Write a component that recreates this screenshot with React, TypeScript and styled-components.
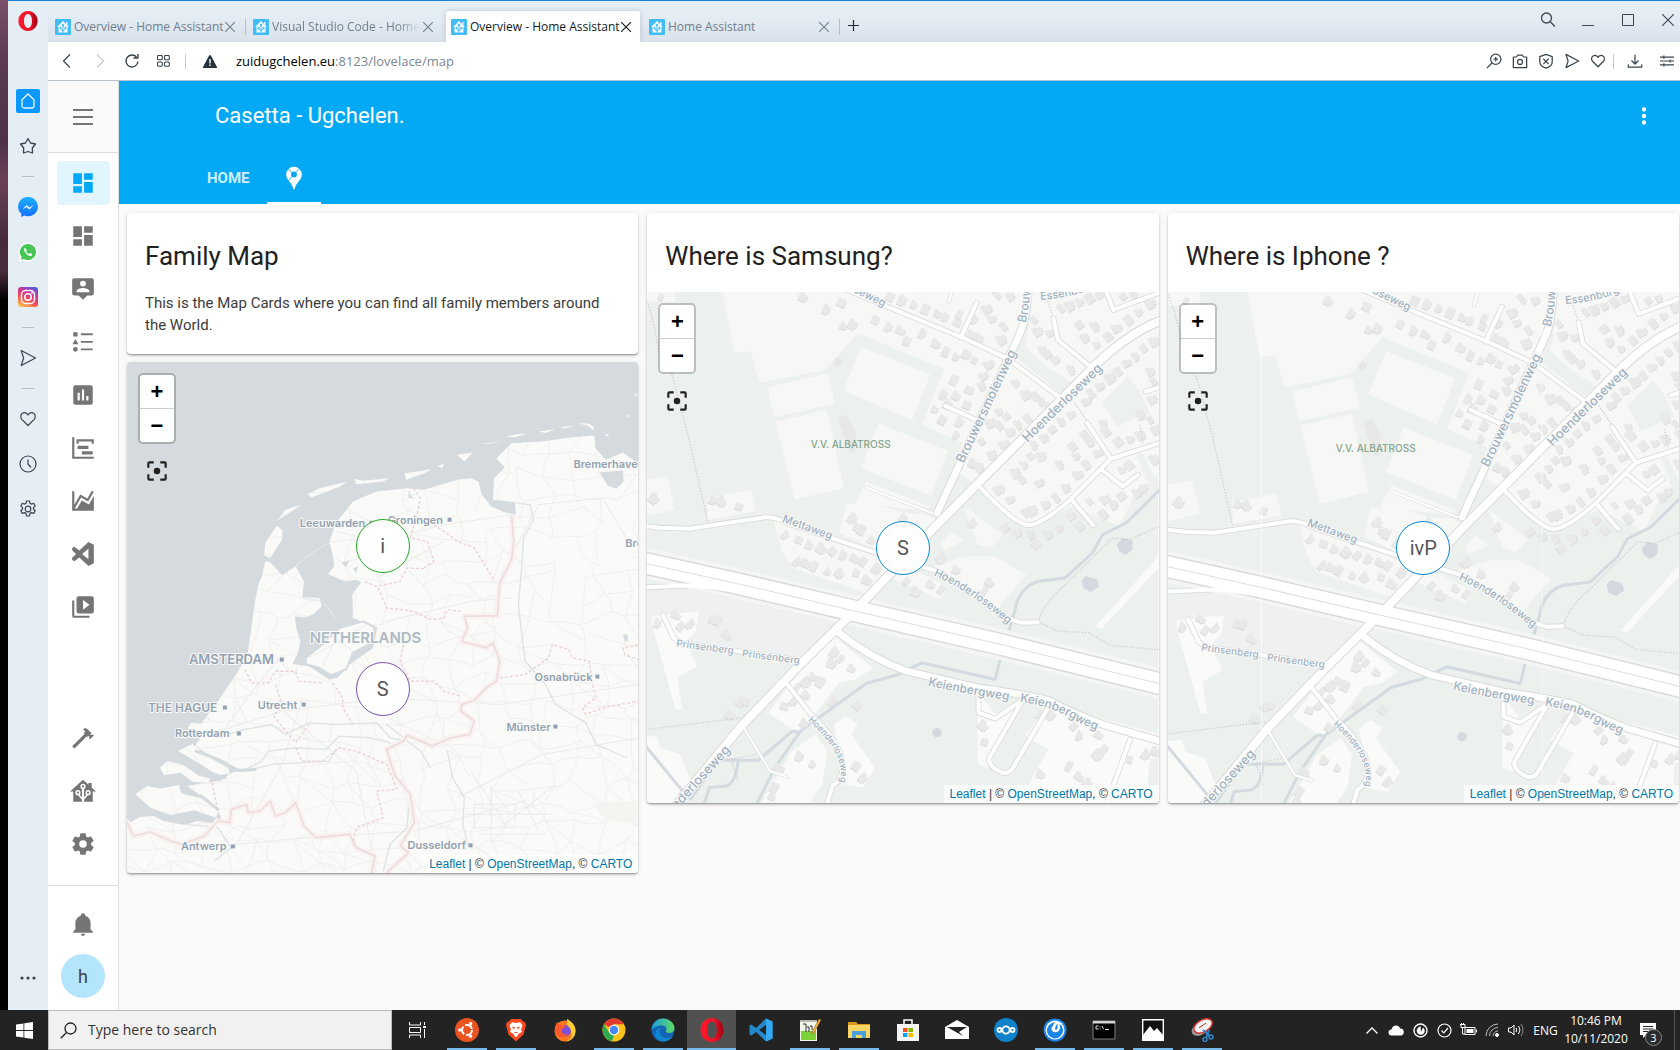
import React, { useId } from "react";
import styled, { createGlobalStyle } from "styled-components";

const GlobalStyle = createGlobalStyle`
  *, *::before, *::after { box-sizing: border-box; }
  body { margin: 0; background: #000; overflow: hidden; }
  button, input { font: inherit; color: inherit; border: 0; padding: 0; margin: 0; background: none; }
  a { color: inherit; text-decoration: none; }
  h1, h2, p { margin: 0; font-weight: 400; }
  svg { display: block; flex: none; }
`;

const UI = `"Open Sans", "Noto Sans", sans-serif`;
const ROBOTO = `Roboto, sans-serif`;

/* ---------- shell ---------- */

const Screen = styled.div`
  display: flex;
  flex-direction: column;
  height: 100vh;
  font-family: ${UI};
`;

const Desktop = styled.div`
  flex: 1;
  min-height: 0;
  display: flex;
  padding-left: 8px;
  background: linear-gradient(#7a4f6b 0, #5b3a52 60px, #4d3247 140px, #6b4059 180px, #452b3d 240px, #4a2c3c 270px, #000 300px);
`;

const BrowserWindow = styled.div`
  flex: 1;
  min-width: 0;
  display: flex;
  border-top: 1px solid #1883d7;
  background: #e5edf5;
`;

const OperaBar = styled.nav`
  width: 40px;
  display: flex;
  flex-direction: column;
  align-items: center;
  padding-bottom: 10px;
  color: #3c4650;
`;

const OperaLogo = styled.button`
  height: 40px;
  margin-bottom: 37px;
  width: 100%;
  display: grid;
  place-items: center;
`;

const OperaButton = styled.button`
  width: 100%;
  height: 45px;
  display: grid;
  place-items: center;
`;

const HomeTile = styled.span`
  width: 24px;
  height: 24px;
  border-radius: 2px;
  background: #0a98ff;
  display: grid;
  place-items: center;
`;

const OperaDivider = styled.span`
  height: 16px;
  width: 12px;
  display: flex;
  align-items: center;
  &::after { content: ""; height: 1px; width: 100%; background: #b4c2ce; }
`;

const Spacer = styled.span`
  flex: 1;
`;

const Main = styled.div`
  flex: 1;
  min-width: 0;
  display: flex;
  flex-direction: column;
`;

/* ---------- tab strip ---------- */

const TabStrip = styled.div`
  height: 41px;
  display: flex;
  align-items: flex-end;
  padding-left: 2px;
  background: linear-gradient(#e5edf5 30%, #d9e1ea);
`;

const Tab = styled.div<{ $active?: boolean }>`
  width: 194px;
  height: 31px;
  margin-right: 4px;
  padding: 0 9px 0 5px;
  display: flex;
  align-items: center;
  gap: 3px;
  background: ${(p) => (p.$active ? "#fff" : "transparent")};
  box-shadow: ${(p) => (p.$active ? "0 0 5px #b6c3d2" : "none")};
  clip-path: inset(-8px -8px 0 -8px);
  border-radius: 2px 2px 0 0;
  color: ${(p) => (p.$active ? "#111a22" : "#71808e")};
`;

const TabLabel = styled.button<{ $fade?: boolean }>`
  flex: 1;
  min-width: 0;
  overflow: ${(p) => (p.$fade ? "hidden" : "visible")};
  white-space: nowrap;
  text-align: left;
  font-size: 12px;
  line-height: 20px;
  mask-image: ${(p) => (p.$fade ? "linear-gradient(90deg, #000 85%, transparent)" : "none")};
`;

const TabClose = styled.button`
  width: 10px;
  height: 14px;
  display: grid;
  place-items: center;
`;

const TabRule = styled.span`
  width: 1px;
  height: 16px;
  margin: 0 2px 7px -3px;
  background: #b3bfcb;
`;

const NewTab = styled.button`
  width: 22px;
  height: 34px;
  color: #222b33;
  display: grid;
  place-items: center;
`;

const WindowButtons = styled.div`
  margin-left: auto;
  align-self: stretch;
  display: flex;
  color: #3d464f;
`;

const WindowButton = styled.button`
  width: 40px;
  height: 38px;
  display: grid;
  place-items: center;
  &:last-child { width: 32px; padding-left: 8px; }
`;

/* ---------- address bar ---------- */

const Toolbar = styled.div`
  height: 39px;
  display: flex;
  align-items: center;
  background: #fff;
  border-bottom: 1px solid #b5c1cb;
  padding-left: 2px;
  color: #3a444d;
`;

const ToolButton = styled.button<{ $w: number }>`
  width: ${(p) => p.$w}px;
  height: 32px;
  display: grid;
  place-items: center;
  &:disabled { color: #c3cad1; }
`;

const ToolRule = styled.span<{ $gap: number }>`
  width: 1px;
  height: 15px;
  margin: 0 ${(p) => p.$gap}px;
  background: #c4c9ce;
`;

const Address = styled.button`
  flex: 1;
  text-align: left;
  font-size: 13px;
  line-height: 20px;
  padding-left: 8px;
  color: #7b8895;
  b { font-weight: 400; color: #000; }
`;

/* ---------- Home Assistant ---------- */

const Page = styled.div`
  flex: 1;
  min-height: 0;
  display: flex;
  background: #fafafa;
  font-family: ${ROBOTO};
`;

const SideNav = styled.nav`
  width: 71px;
  border-right: 1px solid #dcdcdc;
  background: #fff;
  display: flex;
  flex-direction: column;
  color: #757575;
`;

const MenuButton = styled.button`
  height: 72px;
  background: #fafafa;
  border-bottom: 1px solid #dcdcdc;
  display: grid;
  place-items: center;
`;

const NavList = styled.div`
  flex: 1;
  display: flex;
  flex-direction: column;
  align-items: center;
  gap: 9px;
  padding: 8px 0 19px;
`;

const NavFoot = styled.div`
  display: flex;
  flex-direction: column;
  align-items: center;
  gap: 8px;
  padding: 16px 0 12px;
  border-top: 1px solid #dcdcdc;
`;

const NavItem = styled.a<{ $active?: boolean }>`
  width: 53px;
  height: 44px;
  border-radius: 4px;
  display: grid;
  place-items: center;
  color: ${(p) => (p.$active ? "#03a9f4" : "inherit")};
  background: ${(p) => (p.$active ? "#e1f5fe" : "none")};
`;

const Avatar = styled.a`
  width: 44px;
  height: 44px;
  border-radius: 50%;
  background: #b3e5fc;
  color: #424242;
  font-size: 18px;
  display: grid;
  place-items: center;
`;

const Lovelace = styled.main`
  flex: 1;
  min-width: 0;
`;

const Header = styled.header`
  background: #03a9f4;
  color: #fff;
  height: 123px;
  display: flex;
  flex-direction: column;
  justify-content: space-between;
`;

const HeaderRow = styled.div`
  height: 70px;
  display: flex;
  align-items: center;
  justify-content: space-between;
  padding: 0 23px 0 96px;
`;

const AppTitle = styled.h1`
  font-size: 22px;
  line-height: 28px;
`;

const ViewTabs = styled.div`
  display: flex;
  height: 53px;
  padding-left: 71px;
`;

const ViewTab = styled.button<{ $active?: boolean }>`
  padding: 2px ${(p) => (p.$active ? 14 : 17)}px 0;
  font-size: 15px;
  font-weight: 700;
  line-height: 20px;
  color: ${(p) => (p.$active ? "#fff" : "#cdeefd")};
  border-bottom: 2px solid ${(p) => (p.$active ? "#fff" : "transparent")};
`;

const Columns = styled.div`
  display: grid;
  grid-template-columns: repeat(3, minmax(0, 1fr));
  align-items: start;
  gap: 9px;
  padding: 9px 1px 8px 8px;
`;

const Column = styled.div`
  display: flex;
  flex-direction: column;
  gap: 8px;
`;

const Card = styled.section`
  background: #fff;
  border-radius: 4px;
  overflow: hidden;
  box-shadow: 0 2px 2px 0 rgba(0, 0, 0, 0.14), 0 1px 5px 0 rgba(0, 0, 0, 0.1), 0 1px 1px 0 rgba(0, 0, 0, 0.2);
`;

const CardTitle = styled.h2`
  font-size: 26px;
  line-height: 40px;
  padding: 23px 18px 16px;
  color: #212121;
`;

const CardText = styled.p`
  font-size: 15px;
  line-height: 22px;
  padding: 0 18px 18px;
  color: #3c3c3c;
`;

const MapFrame = styled.div`
  position: relative;
  aspect-ratio: 1;
  & > svg { width: 100%; height: 100%; }
`;

const MapControls = styled.div`
  position: absolute;
  top: 11px;
  left: 11px;
  display: flex;
  flex-direction: column;
  align-items: center;
  gap: 14px;
`;

const ZoomBox = styled.div`
  width: 38px;
  border: 2px solid rgba(0, 0, 0, 0.2);
  border-radius: 5px;
  background: #fff;
  background-clip: padding-box;
  display: flex;
  flex-direction: column;
`;

const ZoomButton = styled.button`
  height: 33px;
  font-family: "Liberation Sans", Arial, sans-serif;
  font-size: 22px;
  font-weight: 700;
  line-height: 33px;
  color: #000;
  & + & { border-top: 1px solid #ccc; height: 34px; }
`;

const FocusButton = styled.button`
  color: #212121;
`;

const Marker = styled.button<{ $x: number; $y: number; $color: string }>`
  position: absolute;
  left: ${(p) => p.$x}%;
  top: ${(p) => p.$y}%;
  transform: translate(-50%, -50%);
  width: 54px;
  height: 54px;
  border-radius: 50%;
  border: 1px solid ${(p) => p.$color};
  background: #fff;
  color: #555;
  font-size: 20px;
`;

const Attribution = styled.div`
  position: absolute;
  right: 0;
  bottom: 0;
  padding: 0 6px;
  background: rgba(255, 255, 255, 0.7);
  font-family: "Liberation Sans", Arial, sans-serif;
  font-size: 12px;
  line-height: 18px;
  color: #333;
  a { color: #0078a8; }
`;

/* ---------- Windows taskbar ---------- */

const Taskbar = styled.footer`
  height: 40px;
  display: flex;
  background: #232323;
  color: #fff;
`;

const StartButton = styled.button`
  width: 48px;
  display: grid;
  place-items: center;
`;

const SearchBox = styled.label`
  width: 344px;
  margin-right: 1px;
  display: flex;
  align-items: center;
  gap: 11px;
  padding-left: 11px;
  background: #f1f1f1;
  border: 1px solid #bcbcbc;
  color: #222;
  input {
    flex: 1;
    min-width: 0;
    font-size: 14px;
    line-height: 20px;
    outline: 0;
  }
  input::placeholder { color: #333; opacity: 1; }
`;

const TaskButton = styled.button<{ $open?: boolean; $active?: boolean }>`
  width: 49px;
  height: 40px;
  display: grid;
  place-items: center;
  background:
    linear-gradient(${(p) => (p.$open ? "#76b9ed, #76b9ed" : "transparent, transparent")}) bottom / ${(p) => (p.$active ? 49 : 40)}px 2px no-repeat
    ${(p) => (p.$active ? "#515151" : "transparent")};
`;

const Tray = styled.div`
  margin-left: auto;
  display: flex;
  align-items: center;
  padding-right: 5px;
`;

const TrayButton = styled.button`
  width: 24px;
  height: 40px;
  display: grid;
  place-items: center;
`;

const Language = styled.button`
  font-size: 12px;
  width: 35px;
`;

const Clock = styled.button`
  width: 66px;
  font-size: 12px;
  line-height: 18px;
  time { display: block; }
`;

const Notifications = styled.button`
  position: relative;
  width: 46px;
  height: 40px;
  padding-right: 8px;
  display: grid;
  place-items: center;
  border-right: 1px solid #555;
`;

const Badge = styled.span`
  position: absolute;
  right: 12px;
  bottom: 4px;
  width: 17px;
  height: 17px;
  border-radius: 50%;
  border: 1px solid #8a8a8a;
  background: #2b2b2b;
  font-size: 11px;
  line-height: 15px;
  text-align: center;
`;

/* ---------- icons ---------- */

const Solid = ({ d, size = 26 }: { d: string; size?: number }) => (
  <svg width={size} height={size} viewBox="0 0 24 24" fill="currentColor" fillRule="evenodd"><path d={d} /></svg>
);

const Line = ({ children, size = 18, w = 1.2 }: { children: React.ReactNode; size?: number; w?: number }) => (
  <svg width={size} height={size} viewBox="0 0 18 18" fill="none" stroke="currentColor" strokeWidth={w} strokeLinejoin="round">{children}</svg>
);

const icons = {
  dashboard: "M13 3v6h8V3m-8 18h8V11h-8M3 21h8v-6H3m0-2h8V3H3v10z",
  person: "M20 2H4a2 2 0 0 0-2 2v12a2 2 0 0 0 2 2h4l4 4 4-4h4a2 2 0 0 0 2-2V4a2 2 0 0 0-2-2zm-8 2.3a2.7 2.7 0 1 1 0 5.4 2.7 2.7 0 0 1 0-5.4zM18 15H6v-.9c0-2 4-3.1 6-3.1s6 1.1 6 3.1z",
  list: "M3 3h4v4H3zM10 4h11v1.7H10zM5 9.2 7.8 14H2.2zM10 11h11v1.7H10zM5 16.5a2.2 2.2 0 1 1 0 4.4 2.2 2.2 0 0 1 0-4.4zM10 18h11v1.7H10z",
  chart: "M9 17H7v-7h2zm4 0h-2V7h2zm4 0h-2v-4h2zM19 3H5a2 2 0 0 0-2 2v14a2 2 0 0 0 2 2h14a2 2 0 0 0 2-2V5a2 2 0 0 0-2-2z",
  gantt: "M2 2h2v18h18v2H2V2m5 8h10v3H7v-3m4 5h10v3H11v-3M6 4h16v4h-2V6H8v2H6V4z",
  area: "M17.45 15.18 22 7.31V21H2V3h2v12.54L9.5 6 16 9.78l4.24-7.33 1.73 1-5.23 9.05-6.51-3.75L4.31 19h2.26l4.39-7.56 6.49 3.74z",
  vscode: "M17 1 22 3.4v17.2L17 23 8.6 15.2 4 18.7 2 17.6v-2.2L5.6 12 2 8.6V6.4l2-1.1 4.6 3.5zM17 7.2 11.2 12l5.8 4.8z",
  media: "M4 6H2v14a2 2 0 0 0 2 2h14v-2H4V6m16-4H8a2 2 0 0 0-2 2v12a2 2 0 0 0 2 2h12a2 2 0 0 0 2-2V4a2 2 0 0 0-2-2m-8 12.5v-9l6 4.5-6 4.5z",
  hammer: "M2 19.63 13.43 8.2l-.71-.7 1.42-1.43L12 3.89c1.2-1.19 3.09-1.19 4.27 0l3.6 3.61-1.42 1.41h2.84l.71.71-3.55 3.59-.71-.71V9.62l-1.47 1.42-.71-.71L4.13 21.76z",
  cog: "M12 15.5A3.5 3.5 0 0 1 8.5 12 3.5 3.5 0 0 1 12 8.5a3.5 3.5 0 0 1 3.5 3.5 3.5 3.5 0 0 1-3.5 3.5m7.43-2.53c.04-.32.07-.64.07-.97 0-.33-.03-.66-.07-1l2.11-1.63c.19-.15.24-.42.12-.64l-2-3.46c-.12-.22-.39-.31-.61-.22l-2.49 1c-.52-.39-1.06-.73-1.69-.98l-.37-2.65A.506.506 0 0 0 14 2h-4c-.25 0-.46.18-.5.42l-.37 2.65c-.63.25-1.17.59-1.69.98l-2.49-1c-.22-.09-.49 0-.61.22l-2 3.46c-.13.22-.07.49.12.64L4.57 11c-.04.34-.07.67-.07 1 0 .33.03.65.07.97l-2.11 1.66c-.19.15-.25.42-.12.64l2 3.46c.12.22.39.3.61.22l2.49-1.01c.52.4 1.06.74 1.69.99l.37 2.65c.04.24.25.42.5.42h4c.25 0 .46-.18.5-.42l.37-2.65c.63-.26 1.17-.59 1.69-.99l2.49 1.01c.22.08.49 0 .61-.22l2-3.46c.12-.22.07-.49-.12-.64z",
  bell: "M21 19v1H3v-1l2-2v-6c0-3.1 2.03-5.83 5-6.71V4a2 2 0 0 1 4 0v.29c2.97.88 5 3.61 5 6.71v6l2 2m-7 2a2 2 0 0 1-4 0",
  menu: "M2 4h20v2H2zm0 7h20v2H2zm0 7h20v2H2z",
  dots: "M12 16a2 2 0 1 1 0 4 2 2 0 0 1 0-4m0-6a2 2 0 1 1 0 4 2 2 0 0 1 0-4m0-6a2 2 0 1 1 0 4 2 2 0 0 1 0-4z",
  focus: "M5 15H3v4a2 2 0 0 0 2 2h4v-2H5m0-14h4V3H5a2 2 0 0 0-2 2v4h2m14-6h-4v2h4v4h2V5a2 2 0 0 0-2-2m0 16h-4v2h4a2 2 0 0 0 2-2v-4h-2M12 9a3 3 0 1 0 0 6 3 3 0 0 0 0-6z",
};

const MapPin = () => (
  <svg width="26" height="26" viewBox="0 0 24 24">
    <path d="M12 1.5a7.2 7.2 0 0 0-7.2 7.2c0 2.6 1.2 4.4 3 6.6 1.8 2.2 2.8 3.8 3.3 6 .2.8.4 1.2.9 1.2s.7-.4.9-1.2c.5-2.2 1.5-3.8 3.300-6 1.8-2.2 3-4 3-6.6A7.2 7.2 0 0 0 12 1.5z" fill="#fff" />
    <circle cx="12" cy="8.7" r="2.7" fill="#03a9f4" />
    <path d="M14 6.6 16.8 3.3M10 10.8 6.5 15M10 6.6 6.6 3.8" stroke="#03a9f4" strokeWidth=".8" />
  </svg>
);

const HomeTree = () => (
  <svg width="26" height="26" viewBox="0 0 24 24">
    <path d="M12 1.5 24 12.5h-3V22H3v-9.5H0zM17 4.5h3v5L17 7z" fill="currentColor" />
    <g stroke="#fff" strokeWidth="1.4" fill="currentColor">
      <path d="M12 22V9" strokeWidth="2" /><path d="M12 20l-4-4.500M12 20l4-4.500" />
      <circle cx="12" cy="7.800" r="1.700" /><circle cx="7.300" cy="13.500" r="1.700" /><circle cx="16.700" cy="13.500" r="1.700" />
    </g>
  </svg>
);

const Favicon = () => (
  <svg width="16" height="16" viewBox="0 0 16 16">
    <rect width="16" height="16" rx="1" fill="#41bdf5" />
    <path d="M8 2 14 8h-1.5v5.5h-9V8H2zM11 3.3h1.500v3L11 5z" fill="#f2f9fd" />
    <g stroke="#41bdf5" fill="#41bdf5"><path d="M8 13.5v-7M8 12 5.500 9.500M8 12l2.500-2.500" /><circle cx="8" cy="6" r=".8" /><circle cx="5.500" cy="9" r=".7" /><circle cx="10.500" cy="9" r=".7" /></g>
  </svg>
);

const Cross = ({ size = 10 }: { size?: number }) => (
  <svg width={size} height={size} viewBox="0 0 10 10" stroke="currentColor" strokeWidth={size > 10 ? 0.9 : 1.1}><path d="M0 0 10 10M10 0 0 10" /></svg>
);

const OperaMark = ({ h = 20 }: { h?: number }) => {
  const id = useId();
  return (
    <svg width={h} height={h} viewBox="0 0 20 20">
      <defs><linearGradient id={id} x1="0" x2="1"><stop offset="0" stopColor="#ff1b2d" /><stop offset=".6" stopColor="#f01227" /><stop offset="1" stopColor="#9c0012" /></linearGradient></defs>
      <path fillRule="evenodd" fill={`url(#${id})`} d="M10 0c5.500 0 9.600 4.500 9.600 10S15.500 20 10 20 .4 15.500.4 10 4.500 0 10 0zm0 3C7.500 3 6 6 6 10s1.500 7 4 7 4-3 4-7-1.500-7-4-7z" />
    </svg>
  );
};

const heart = "M9 15.500 2.800 9.300C1.200 7.500 1.500 4.500 3.400 3.300 5.500 2 8 2.900 9 5c1-2.100 3.500-3 5.600-1.700 1.900 1.200 2.200 4.200.6 6z";
const plane = "M2.200 1.500 16.500 9 2.200 16.500 4.600 9z";

const Messenger = () => (
  <svg width="20" height="20" viewBox="0 0 20 20"><defs><linearGradient id="msg" x2="0" y2="1"><stop stopColor="#1cb0ff" /><stop offset="1" stopColor="#1370ff" /></linearGradient></defs><path d="M10 0a10 9.600 0 1 1-3.500 18.600L3.300 20v-3.300A9.600 9.600 0 0 1 10 0z" fill="url(#msg)" /><path d="m4.500 12.500 4-4.500 3 2.500L15.500 8l-4 4.500-3-2.500z" fill="#fff" /></svg>
);

const WhatsApp = () => (
  <svg width="20" height="20" viewBox="0 0 20 20"><path d="M10 .5a9.500 9.500 0 1 1-4.500 17.900L.8 19.500 2 15A9.500 9.500 0 0 1 10 .5z" fill="#fff" /><path d="M10 2a8 8 0 1 1-4 14.900L2.800 17.700 3.700 15A8 8 0 0 1 10 2z" fill="#45c655" /><path d="M7.300 5.800c-1.500.7-1.600 2.300-.3 4.300 1.700 2.600 4.400 4.600 6.200 3.700 1-.5 1.200-1.400 1-1.700l-2-1.100-1 1.100C9.900 11.600 8.700 10.500 8.100 9.200l.8-1z" fill="#fff" /></svg>
);

const Instagram = () => (
  <svg width="20" height="20" viewBox="0 0 20 20"><defs><linearGradient id="ig" x1=".2" y1="1" x2=".7" y2="0"><stop stopColor="#fdc04f" /><stop offset=".4" stopColor="#f3484f" /><stop offset=".7" stopColor="#c9339a" /><stop offset="1" stopColor="#5a58d6" /></linearGradient></defs><rect width="20" height="20" rx="3" fill="url(#ig)" /><rect x="3.500" y="3.500" width="13" height="13" rx="4" fill="none" stroke="#fff" strokeWidth="1.500" /><circle cx="10" cy="10" r="3.200" fill="none" stroke="#fff" strokeWidth="1.500" /><circle cx="14" cy="6" r=".9" fill="#fff" /></svg>
);

const Windows = () => (
  <svg width="17" height="17" viewBox="0 0 17 17" fill="#fff"><path d="M0 2.500 7.500 1.400V8H0zM8.300 1.300 17 0v8H8.300zM0 8.900h7.500v6.600L0 14.400zM8.300 8.900H17V17l-8.700-1.300z" /></svg>
);

/* ---------- street map ---------- */

// Drawing units are roughly a third of a map pixel.
const SKETCH = "translate(-7 -87) scale(.338 .3333)";

const builtUp = [
  "235,200 278,443 328,440 353,535 548,495 645,385 902,492 835,660 955,715 880,920 940,800 1010,850 1090,930 1150,975 1280,905 1420,965 1470,860 1545,800 1545,200",
  "655,427 860,508 806,646 602,557", "378,547 556,505 578,597 397,637", "403,650 553,615 604,850 457,885",
  "706,656 912,738 862,873 655,790", "670,830 860,905 850,920 720,903 690,935 637,895",
  "-20,830 80,817 103,915 -20,945", "200,880 330,855 345,920 200,945", "-20,200 100,200 105,290 -20,290",
  "610,895 720,905 780,925 850,930 880,950 830,1000 700,1035 590,985", "395,945 420,1040 450,1090 680,1170 730,1115 890,1185 910,1145 820,1100 690,1050 560,1010",
  "960,905 1075,990 1040,1030 1000,1020", "870,1085 960,1055 1050,1055 1145,1110 1060,1210 1000,1180 900,1130", "920,980 960,1010 900,1035 890,1020",
];
const openLand = [
  "35,1235 175,1220 165,1280 135,1310 170,1385 110,1420 125,1515 105,1515 35,1260",
  "-20,1600 50,1595 60,1630 120,1650 160,1760 100,1800 -20,1800", "380,1525 560,1285 690,1390 640,1425 590,1435 480,1580 450,1575",
  "450,1640 520,1590 555,1640 540,1740 500,1795 360,1795", "575,1560 610,1535 645,1560 625,1590 697,1690 660,1750 600,1740",
  "1000,1460 1060,1540 1130,1490 1030,1690 1000,1680", "1140,1595 1210,1635 1120,1795 1500,1795 1510,1665 1545,1660 1545,1590 1210,1500",
  "1545,1045 1350,1265 1368,1272 1545,1080", "485,1765 510,1765 510,1800 485,1800",
];
const greens = ["1160,261 1150,380 1140,425 1210,490 1290,540 1300,580 1240,560 1110,455 1125,380", "1370,590 1445,515 1480,560 1510,625 1410,665", "1470,750 1490,745 1530,830 1500,830"];

const wide = ["M1155,200L1150,261 1141,335Q1135,370 1105,430L880,925", "M590,1285Q680,1360 790,1400L1000,1450Q1130,1468 1210,1488 1300,1535 1370,1560L1560,1616"];
const trunk = ["M1560,340Q1450,380 1350,480L880,960 640,1215 470,1385 300,1565 90,1825"];
const streets = [
  "M-20,960L60,969 145,972 370,938Q400,935 440,957L700,1045 880,1100Q960,1150 1080,1238L1130,1255 1178,1253",
  "M560,232L720,300 960,400 1090,462 1245,578", "M998,293L950,398", "M905,603L995,645", "M1225,340L1238,405 1340,490",
  "M1370,230L1403,315 1560,255", "M1560,540L1498,560", "M1325,655L1395,762 1560,708", "M1395,762L1275,885Q1190,960 1150,962 1110,958 1010,850",
  "M1368,795L1430,845 1475,810", "M1278,885L1343,962", "M68,1232L100,1300 120,1315 490,1370", "M1003,1465V1525L1052,1543 1135,1485",
  "M1135,1485L1035,1660Q1030,1685 1070,1704 1092,1712 1105,1690L1215,1500", "M1452,1605L1375,1820", "M437,1440L510,1535Q600,1620 602,1690 595,1730 570,1745L548,1820", "M-20,1150L160,1142 300,1160 420,1185",
];
const lanes = ["M670,848L865,925", "M307,1570L385,1700 435,1717", "M930,240L915,290"];
const streams = [
  "M1560,835L1440,955 1370,990 1340,1045 1260,1120 1180,1130Q1120,1150 1110,1220L1070,1355 1052,1425 835,1375 765,1410 670,1437 475,1580 400,1690 345,1800",
  "M470,1590Q460,1570 440,1590L350,1668H230L150,1785", "M290,1670Q285,1735 255,1745L205,1750 190,1800", "M-20,1580L130,1765",
];
const paths = [
  "M0,230L21,290Q40,340 55,440L95,510 140,680 200,950", "M1205,280L1225,340", "M1285,590L1325,650", "M1480,660L1490,715",
  "M-20,1580L300,1540", "M1180,1250Q1200,1190 1260,1140L1400,1000 1450,1005 1560,955", "M1180,1253L1240,1280 1330,1285 1395,1323 1560,1338", "M270,1665L345,1650M270,1665L290,1730",
];
const homes = `62,275 482,275 550,313 597,293 628,358 602,362 740,275 775,285 810,298 845,312 880,325 903,335 940,352 978,387 1000,400 697,345 735,365 770,375 790,408 835,385 875,415 905,440 935,455 965,447 990,465 1030,480
985,340 945,328 1025,313 1040,342 1075,365 1068,405 1095,275 1055,270 1015,515 1010,545 975,555 935,572 897,568 968,600 910,597 872,612 895,645 945,650 935,690 930,525 1060,620 1035,655 1084,635 1110,535 1140,570 1168,573 1185,590 1210,602 1145,640 1118,660 1095,682 1062,662 1075,718 1040,750 1010,710 985,775 1003,788
1165,345 1175,380 1212,385 1245,310 1270,303 1300,292 1330,280 1360,270 1190,435 1205,450 1228,465 1275,495 1300,360 1315,400 1350,420 1385,395 1345,365 1410,370 1445,345 1475,322 1510,297 1430,275 1460,270 1520,410 1490,430 1465,455 1440,475 1415,500 1390,520 1360,545 1335,565 1320,590 1510,500 1520,530 1515,585 1480,630 1510,645 1525,675 1450,703 1415,712 1480,692 1370,655 1378,680 1275,630 1245,650 1220,675 1195,700 1165,720 1315,690 1330,712 1355,745 1280,725 1240,780 1295,810 1320,780 1290,755 1185,755 1155,755 1135,780 1110,805 1130,825 1060,855 1095,885 1140,925 1158,918 1200,900 1230,880 1180,835 1260,850 1330,890 1375,885 1400,900 1425,875 1470,865 1425,795 1448,782 1520,765 1490,850 1370,930 1275,935
430,990 470,1005 500,1020 535,1030 570,1040 600,1050 635,1060 660,1070 465,1070 490,1075 515,1085 555,1100 590,1105 640,1105 670,1125 700,1090 790,1130 815,1160 860,1138 892,1155 892,1060 935,1095 1020,1158 1035,1132 985,955 1080,970 1115,985 1155,990 1175,1020 1205,990 1240,970 1300,965 628,940 640,965 655,975 685,1005 240,888 292,905 215,885 40,880 780,940
50,1255 105,1230 120,1265 148,1258 215,1245 230,1247 256,1290 298,1493 314,1493 265,1530 575,1342 595,1362 565,1375 625,1390 465,1448 490,1432 510,1415 533,1432 490,1470 455,1490 427,1505 485,1555 570,1490 645,1503 470,1655 510,1678 640,1685 660,1720 410,1690 398,1750 390,1775 1015,1562 1020,1612 1185,1530 1215,1530 1285,1565 1300,1593 1357,1590 1375,1635 1355,1650 1185,1708 1270,1685 1300,1715 1325,1735 1450,1665 1525,1640 1497,1650`
  .split(/\s+/).map((p) => p.split(",").map(Number));

const homeShape = (x: number, y: number, i: number) => {
  const turn = x > 1000 && y < 1000 ? -38 + (i % 3) * 6 : y < 700 ? 26 : 20 + (i % 4) * 8;
  const w = 16 + ((i * 7) % 11);
  const h = 21 + ((i * 5) % 12);
  const d = i % 3 === 0
    ? `M${-w / 2},${-h / 2}h${w}v${h}h${-w}z`
    : `M${-w / 2},${-h / 2}h${w * 0.6}v5h${w * 0.6}v${h * 0.6}h-5v${h * 0.4 - 5}h${-w * 1.2 + 5}z`;
  return { d, t: `translate(${x} ${y}) rotate(${turn})` };
};

const streetLabels: { d: string; text: string; size: number; end?: boolean }[] = [
  { d: "M317,172L371,58", text: "Brouwersmolenweg", size: 13 },
  { d: "M379,31Q386,8 388,-95", text: "Brouw", size: 12 },
  { d: "M381,151L462,72", text: "Hoenderloseweg", size: 13 },
  { d: "M130,-36L200,-3 237,15", text: "oseweg", size: 11, end: true },
  { d: "M394,8Q425,6 455,-6", text: "Essenburg", size: 11 },
  { d: "M135,230L190,250", text: "Mettaweg", size: 11 },
  { d: "M287,284Q325,300 370,340", text: "Hoenderloseweg", size: 11 },
  { d: "M29,355L98,364", text: "Prinsenberg", size: 10 },
  { d: "M95,365L165,374", text: "Prinsenberg", size: 10 },
  { d: "M281,394Q330,405 380,411", text: "Keienbergweg", size: 12 },
  { d: "M373,410Q405,415 425,427T475,446", text: "Keienbergweg", size: 12 },
  { d: "M161,429Q200,463 193,490L185,505", text: "Hoenderloseweg", size: 9 },
  { d: "M-4,556L84,459", text: "nderloseweg", size: 13, end: true },
];

const Poly = ({ list, fill }: { list: string[]; fill: string }) => <g fill={fill}>{list.map((p) => <polygon key={p} points={p} />)}</g>;
const Strokes = ({ list, color, w, dash }: { list: string[]; color: string; w: number; dash?: string }) => (
  <g fill="none" stroke={color} strokeWidth={w} strokeDasharray={dash} strokeLinejoin="round" strokeLinecap={dash ? "butt" : "round"}>
    {list.map((d) => <path key={d} d={d} />)}
  </g>
);

const motorway = "M-20,1068L280,1135 600,1211 1070,1320 1560,1443";

const StreetMap = ({ shift = 0 }: { shift?: number }) => {
  const id = useId();
  return (
    <svg viewBox="0 0 512 512" preserveAspectRatio="xMidYMid slice" role="img" aria-label="Street map of Ugchelen">
      <rect width="512" height="512" fill="#ecf1ed" />
      <g transform={`translate(${shift} ${shift})`}>
        <g transform={SKETCH}>
          <polygon points="-20,1165 160,1160 560,1255 480,1365 120,1310 -20,1280" fill="#eff1f1" />
          <Poly list={builtUp} fill="#f7f7f6" />
          <Poly list={openLand} fill="#fafaf8" />
          <Poly list={greens} fill="#ecf1ed" />
          <Strokes list={streams} color="#d3dbe0" w={9} />
          <g fill="#d3d9de"><path d="M1412,1020l18-20 30,8 -2,28-20,16-18-12z" /><path d="M1308,1130l12-16 34,10 6,22-24,16-22-10z" /><circle cx="880" cy="1585" r="14" /></g>
          <g>
            {homes.map(([x, y], i) => {
              const s = homeShape(x, y, i);
              return <g key={i} transform={s.t}><path d={s.d} fill="#dadada" transform="translate(1 3)" /><path d={s.d} fill="#e9e9e9" /></g>;
            })}
            <path d="M588,645l22-18 30,55-5,58h-15z" fill="#e7e7e7" />
            <path d="M572,475l12-20 16,12-14,22z" fill="#e7e7e7" />
          </g>
          <Strokes list={paths} color="#cfcfcf" w={4} dash="4 5" />
          <Strokes list={lanes} color="#dedede" w={11} />
          <Strokes list={streets} color="#dadada" w={17} />
          <Strokes list={wide} color="#dadada" w={26} />
          <Strokes list={[motorway]} color="#f5f5f3" w={92} />
          <Strokes list={[motorway]} color="#dadada" w={70} />
          <Strokes list={trunk} color="#dadada" w={30} />
          <Strokes list={lanes} color="#fff" w={7} />
          <Strokes list={streets} color="#fff" w={12} />
          <Strokes list={wide} color="#fff" w={20} />
          <Strokes list={[motorway]} color="#fff" w={61} />
          <Strokes list={trunk} color="#fff" w={24} />
          <Strokes list={[motorway]} color="#dedede" w={3} />
        </g>
        {shift > 0 && <path d="M89.500-4v516M370.500-4v516" stroke="#fff" opacity=".6" />}
        <g fontFamily="Inter, sans-serif" fontWeight="500" fill="#a0b1c0" stroke="#fafafa" strokeWidth="2" strokeLinejoin="round" paintOrder="stroke">
          {streetLabels.map((l, i) => (
            <React.Fragment key={i}>
              <path id={`${id}${i}`} d={l.d} fill="none" stroke="none" />
              <text fontSize={l.size} textAnchor={l.end ? "end" : "start"}>
                <textPath href={`#${id}${i}`} startOffset={l.end ? "100%" : "0"}>{l.text}</textPath>
              </text>
            </React.Fragment>
          ))}
          <text x="204" y="156" fontSize="10" textAnchor="middle" fill="#84a68e" stroke="none">V.V. ALBATROSS</text>
        </g>
      </g>
    </svg>
  );
};

/* ---------- country map ---------- */

const COUNTRY = "translate(-7 -157) scale(.338 .3333)";

const land = [
  "M21,2020V1858L60,1838 100,1835 130,1850 190,1862 230,1850 285,1858 300,1835 262,1800 240,1775 200,1745 235,1738 300,1728 330,1705 355,1698 320,1688 270,1655 222,1625 237,1603 200,1572 210,1555 240,1558 290,1490 350,1400 378,1350 400,1190 410,1140 422,1110 430,1070 445,1073 480,1112 520,1085 545,1130 540,1178 590,1180 598,1205 570,1230 550,1238 518,1236 522,1270 535,1310 525,1350 510,1378 560,1385 620,1425 645,1420 680,1380 750,1330 762,1268 690,1240 688,1170 715,1132 700,1126 665,1130 616,1108 635,1085 628,1040 620,1010 640,955 690,890 760,860 850,850 900,855 1000,825 1040,820 1062,830 1072,870 1100,905 1130,918 1170,892 1105,885 1108,820 1140,787 1115,762 1130,745 1160,715 1250,710 1340,697 1405,692 1408,730 1440,765 1470,752 1490,742 1545,785 1545,2020z",
  "M465,962L482,978 480,1005 445,1060 427,1052 430,1015z", "M465,948L490,915 538,900 515,915z", "M556,868L590,850 672,831 650,846 566,878z",
  "M693,822L720,828 797,820 780,830 700,838z", "M842,805L880,800 922,793 900,806 848,825z", "M998,750L1045,743 1020,770z", "M940,785L960,775 955,790z", "M1060,718L1132,709 1100,716z",
  "M1145,695L1175,688 1207,686 1170,697z", "M1240,680L1290,673 1260,684z", "M1300,668L1345,662 1320,671z", "M1355,655L1390,656 1405,668 1402,676 1385,662z", "M1436,690l14-4-6,8z", "M1500,633l10-3-2,7z", "M1523,570l8-4v9z",
  "M172,1640L215,1618 250,1650 322,1692 324,1708 290,1713 240,1680 205,1660z", "M118,1690L140,1670 185,1680 235,1715 268,1722 260,1735 215,1732 180,1705 130,1712z",
  "M45,1770L80,1745 120,1752 175,1742 180,1765 250,1785 292,1818 285,1840 220,1818 150,1832 90,1810z",
];
const inlets = ["M1420,802L1490,797 1492,830 1470,852 1445,842z", "M1128,892L1170,892 1172,930 1130,920z", "M655,1075l25-8-10,20z", "M690,1092l15-8-4,20z", "M1490,1290h14v18l-8,4z", "M855,855l8,20 12,6-20-2z"];
const rivers = [
  "M1175,895L1215,900 1225,945 1195,1000 1190,1090 1180,1200 1200,1370 1260,1440 1290,1500 1380,1555 1410,1620 1500,1660", "M285,1600L370,1575 450,1560 490,1590 560,1555 640,1560 760,1555 800,1600 850,1610",
  "M320,1690L370,1697 420,1670 440,1640 520,1630 610,1635 650,1595 740,1600 800,1615", "M370,1700L450,1680 620,1670 640,1635", "M790,1560L840,1600 890,1640 920,1690",
  "M970,1640L985,1720 1020,1780 1015,1860 1030,1920", "M860,1770L850,1870 800,1920 780,2000", "M200,1860L290,1870 330,1930 280,1970",
];
const borders = [
  "M1160,935L1166,1010 1160,1065 1125,1135 1118,1233 1020,1235 1030,1270 1012,1310 1085,1330 1105,1315 1125,1370 1115,1430 1085,1450 1050,1487 1012,1500 1010,1520 1050,1550 1035,1590 980,1600 925,1625 850,1592 840,1610 790,1635 800,1670 815,1715 860,1770 872,1855 830,1925 855,1945 785,2010",
  "M21,1855L40,1895 90,1883 150,1910 185,1920 250,1895 290,1850 325,1855 330,1815 375,1800 380,1825 415,1820 445,1790 460,1835 490,1825 520,1795 545,1865 580,1900 680,1890 700,1930 755,1955 745,2010",
];
const provinces = [
  "M870,850L890,880 880,930 860,1000 910,1010 930,1070 900,1090", "M930,960L960,980 1000,1010 1050,1030 1110,1130", "M900,1092L850,1090 830,1130 760,1145 725,1130", "M765,1150L790,1210 870,1220 920,1245 960,1240 970,1215 1010,1220",
  "M370,1395L390,1435 440,1435 460,1400 520,1400 530,1430 600,1435", "M460,1440L480,1500 455,1535 520,1615 560,1560", "M630,1435L660,1480 660,1510 690,1560", "M840,1320L830,1370 860,1430 930,1430 960,1460 1010,1475",
  "M520,1630L540,1670 600,1670 650,1630 700,1640 790,1680 820,1755 760,1760 780,1840 700,1870 690,1915", "M270,1720L280,1770 295,1850", "M1125,1420L1200,1410 1270,1360 1280,1320 1330,1335 1340,1360 1390,1370 1400,1440 1410,1480 1370,1510 1380,1530 1430,1510 1535,1490", "M1535,1320L1490,1330 1495,1350 1535,1365",
];

const mesh = (() => {
  let seed = 11;
  const rnd = () => ((seed = (seed * 16807) % 2147483647) / 2147483647);
  const cols = 22;
  const rows = 23;
  const pts = Array.from({ length: rows }, (_, r) =>
    Array.from({ length: cols }, (_, c) => [c * 74 + rnd() * 62 - 10, 660 + r * 62 + rnd() * 52]),
  );
  const out: string[] = [];
  const join = (a: number[], b: number[]) =>
    out.push(`M${a[0].toFixed()},${a[1].toFixed()}Q${((a[0] + b[0]) / 2 + rnd() * 30 - 15).toFixed()},${((a[1] + b[1]) / 2 + rnd() * 30 - 15).toFixed()} ${b[0].toFixed()},${b[1].toFixed()}`);
  pts.forEach((row, r) =>
    row.forEach((p, c) => {
      if (c + 1 < cols && rnd() > 0.15) join(p, row[c + 1]);
      if (r + 1 < rows && rnd() > 0.2) join(p, pts[r + 1][c]);
      if (r + 1 < rows && c + 1 < cols && r > 8 && rnd() > 0.6) join(p, pts[r + 1][c + 1]);
    }),
  );
  return out.join("");
})();

const cities: [string, number, number, number, number?][] = [
  ["Leeuwarden", 173, 165, 11, 244], ["Groningen", 261, 162, 11, 322], ["Bremerhaven", 447, 106, 11], ["Bremen", 499, 185, 11],
  ["AMSTERDAM", 62, 302, 13, 154], ["THE HAGUE", 21, 350, 12, 97], ["Rotterdam", 48, 376, 11, 111], ["Utrecht", 131, 347, 11, 176],
  ["Osnabrück", 408, 319, 11, 470], ["Münster", 380, 369, 11, 428], ["Antwerp", 54, 489, 11, 105], ["Dusseldorf", 281, 488, 11, 343],
];

const CountryMap = () => (
  <svg viewBox="0 0 512 512" preserveAspectRatio="xMidYMid slice" role="img" aria-label="Map of the Netherlands">
    <rect width="512" height="512" fill="#d4dadd" />
    <g transform={COUNTRY}>
      <clipPath id="land">{land.map((d) => <path key={d} d={d} />)}</clipPath>
      <g fill="#fafaf8">{land.map((d) => <path key={d} d={d} />)}</g>
      <g clipPath="url(#land)" fill="none">
        <path d={mesh} stroke="#f0f0ef" strokeWidth="3" />
        <g stroke="#ebebea" strokeWidth="3">
          <path d="M290,1600L400,1450 480,1350M230,1600L480,1520 790,1480 1120,1500 1540,1440M480,1520L700,1700 760,2010M340,1930L480,1680 540,1480M340,1920L560,1900 870,1880 1200,1790M1000,1780L1250,1650 1540,1600M1040,1700L1140,1860 1290,1740M640,980L760,1010 960,960 1160,930M760,1120L960,1010M790,1250L1040,1190 1160,1180M1140,1090L1240,900 1430,880 1500,1000" />
          <path d="M1050,1800h120v70h-120zM1100,1740v180M1020,1830h260M1060,1890h200M1180,1760l60,120" />
        </g>
      </g>
      <path d="M1400,1795L1535,1790V1855L1440,1850z" fill="#f3f5f1" />
      <path d="M550,1360L600,1320 650,1270 720,1250 755,1268 745,1315 690,1345 670,1395 625,1412 590,1390 550,1378z" fill="#fafaf8" stroke="#d4dadd" strokeWidth="6" />
      <path d="M560,1360L650,1310 730,1260M600,1385L640,1300 690,1340" fill="none" stroke="#ececec" strokeWidth="3" />
      <g fill="#d4dadd">{inlets.map((d) => <path key={d} d={d} />)}</g>
      <Strokes list={["M520,1085L560,1050 625,1010", "M545,1180L600,1190 640,1240"]} color="#e6e9ea" w={3} />
      <Strokes list={rivers} color="#dde3e6" w={4} />
      <Strokes list={["M225,1640L290,1665 350,1698 400,1695", "M190,1655L250,1700 310,1720", "M190,1765L240,1775 290,1815"]} color="#d4dadd" w={9} />
      <Strokes list={borders} color="#f8f2f1" w={18} />
      <Strokes list={borders} color="#efdadc" w={5} />
      <Strokes list={provinces} color="#ecd0d3" w={4} dash="9 6" />
    </g>
    <g fontFamily="Inter, sans-serif" fontWeight="600" fill="#93a2b2" stroke="#fafaf8" strokeWidth="2" strokeLinejoin="round" paintOrder="stroke">
      <text x="183" y="281" fontSize="15" fill="#adbac5">NETHERLANDS</text>
      {cities.map(([name, x, y, size, dot]) => (
        <React.Fragment key={name}>
          <text x={x} y={y} fontSize={size}>{name}</text>
          {dot && <rect x={dot - 1} y={y - 6} width="4" height="4" stroke="none" />}
        </React.Fragment>
      ))}
    </g>
  </svg>
);

const MapView = ({ children }: { children: React.ReactNode }) => (
  <MapFrame>
    {children}
    <MapControls>
      <ZoomBox><ZoomButton aria-label="Zoom in">+</ZoomButton><ZoomButton aria-label="Zoom out">−</ZoomButton></ZoomBox>
      <FocusButton aria-label="Reset focus"><Solid d={icons.focus} /></FocusButton>
    </MapControls>
    <Attribution><a href="#leaflet">Leaflet</a> | © <a href="#osm">OpenStreetMap</a>, © <a href="#carto">CARTO</a></Attribution>
  </MapFrame>
);

/* ---------- taskbar apps ---------- */

const App24 = ({ children }: { children: React.ReactNode }) => <svg width="24" height="24" viewBox="0 0 24 24">{children}</svg>;

const apps: { name: string; open?: boolean; active?: boolean; art: React.ReactNode }[] = [
  { name: "Ubuntu", open: true, art: <App24><circle cx="12" cy="12" r="12" fill="#e95420" /><circle cx="12" cy="12" r="5" fill="none" stroke="#fff" strokeWidth="2" strokeDasharray="8.500 2" /><g fill="#fff"><circle cx="4.800" cy="12" r="1.700" /><circle cx="15.600" cy="5.800" r="1.700" /><circle cx="15.600" cy="18.200" r="1.700" /></g></App24> },
  { name: "Brave", open: true, art: <App24><path d="M7 1h10l2 2.500 2 .5 1 3-2.500 9.500L12 23.500 4.500 16.500 2 7l1-3 2-.5z" fill="#fb4a20" /><path d="m12 5 4-.7 2.500 3-1.500 4.500 1 2-3.500 2.200-1.500 2.500-1 .8-1-.8-1.500-2.500L6 13.800l1-2L5.500 7.300l2.500-3z" fill="#fff" /><path d="M8 8.500l3 .8-1 2.500zM16 8.500l-3 .8 1 2.500zM10 14h4l-2 1.500z" fill="#fb4a20" /></App24> },
  { name: "Firefox", art: <App24><circle cx="12" cy="13" r="10.500" fill="#ff7a1f" /><path d="M14 1c4 2 9 6 8.500 13A10.500 10.500 0 0 1 12 23.500c5-1 7.500-5 6.500-9S13 8 14 1z" fill="#ffcf32" /><circle cx="12" cy="13" r="5.800" fill="#7a4fe0" /><path d="M2 9l2-5 2.500 3C9 6 12 8 12 10c-3 0-4 2-3 4 1 2.500 4 3 6 2-2 4-7 4.500-10 2S1.500 12 2 9z" fill="#ff5a2c" /></App24> },
  { name: "Chrome", open: true, art: <App24><circle cx="12" cy="12" r="11.500" fill="#fbc116" /><path d="M12 12 2 6.300A11.500 11.500 0 0 1 22 6.300H12z" fill="#e33b2e" /><path d="M2 6.300 7.500 15 12 17l-2 6.300A11.500 11.500 0 0 1 2 6.300z" fill="#2da94f" /><circle cx="12" cy="12" r="5.400" fill="#fff" /><circle cx="12" cy="12" r="4.200" fill="#4587f3" /></App24> },
  { name: "Edge", open: true, art: <App24><defs><linearGradient id="edge" x2="1"><stop stopColor="#1e9bdf" /><stop offset="1" stopColor="#5fdb63" /></linearGradient></defs><circle cx="12" cy="12" r="11.500" fill="#1464b4" /><path d="M.5 12C1 5 6 .5 12 .5S23.500 5 23.500 10c0 3-2.500 5-5.500 5-2 0-3.500-.8-3-2 1.500-3-.5-5.500-4-5.500C6 7.500 2 10 .5 12z" fill="url(#edge)" /><path d="M9.500 10c-3 4-.5 9 5 10 3 .5 6-.8 7.500-2.500-1.500 3-5 6-10 6-6-.500-9-5-7.500-9.500.8-2.500 3-3.800 5-4z" fill="#0f86cf" /></App24> },
  { name: "Opera", open: true, active: true, art: <OperaMark h={24} /> },
  { name: "Visual Studio Code", art: <App24><path d="M17 .5 23.500 3.500v17L17 23.500 7 14l-4.500 3.500L.5 16.500v-9l2-1L7 10zM17 7l-7 5 7 5z" fill="#2489ca" fillRule="evenodd" /><path d="M17 .5 23.500 3.500v17L17 23.500z" fill="#35a8f0" /></App24> },
  { name: "Notepad++", open: true, art: <App24><path d="M2 3h17v20H2z" fill="#f2f5ea" /><path d="M3 13h15v9H3z" fill="#7bd136" /><path d="M5 6h3v8M9 9h2v5M12 8h2v4" stroke="#333" fill="none" /><path d="M2 2h17v2H2z" fill="#b8b8b8" /><path d="m14 14 7-13 2 1-7 13-2 1z" fill="#f3b33d" stroke="#7d5b1d" strokeWidth=".5" /></App24> },
  { name: "File Explorer", open: true, art: <App24><path d="M1 4h8l2 2h12v3H1z" fill="#d89b1c" /><path d="M1 7h22v13H1z" fill="#fbd667" /><path d="M5 13h14v7h-4v-3H9v3H5z" fill="#4ba0dd" /></App24> },
  { name: "Microsoft Store", art: <App24><path d="M8 7V2h8v5" fill="none" stroke="#fff" strokeWidth="1.500" /><path d="M1 6h22v17H1z" fill="#f4f4f4" /><path d="M7 10h4.500v4H7z" fill="#f25022" /><path d="M12.500 10H17v4h-4.500z" fill="#7fba00" /><path d="M7 15h4.500v4H7z" fill="#00a4ef" /><path d="M12.500 15H17v4h-4.500z" fill="#ffb900" /></App24> },
  { name: "Mail", art: <App24><path d="M12 2 24 9v12H0V9z" fill="#fff" /><path d="M2 9h20l-8 5 4 4z" fill="#232323" /></App24> },
  { name: "Nextcloud", art: <App24><circle cx="12" cy="12" r="12" fill="#0f82c9" /><g fill="none" stroke="#fff" strokeWidth="1.800"><circle cx="12" cy="12" r="3.600" /><circle cx="5.500" cy="12" r="2" /><circle cx="18.500" cy="12" r="2" /></g></App24> },
  { name: "Mattermost", open: true, art: <App24><circle cx="12" cy="12" r="11.500" fill="#1b84e8" /><circle cx="12" cy="12" r="9.500" fill="#fff" /><path d="M9 5a8 8 0 1 0 7 .5c2 3 1.500 7-2 8.500-3 1-6-1-5.500-4L12 4z" fill="#1b84e8" /><path d="M12.500 12c-1-2 .5-5 2-6.500V11z" fill="#1b84e8" /></App24> },
  { name: "Command Prompt", open: true, art: <App24><path d="M1 3h22v18H1z" fill="#000" stroke="#9b9b9b" strokeWidth=".8" /><path d="M1 3h22v2.500H1z" fill="#d7d7d7" /><path d="M4 8h2.500M4 8v3h2.500M8 8.500v.8M8 10.500v.8M10 8l1.500 3M13 11.500h4" stroke="#ddd" fill="none" /></App24> },
  { name: "Photos", open: true, art: <App24><path d="M1.700 1.700h20.600v20.600H1.700z" fill="#111" stroke="#fff" strokeWidth="1.400" /><path d="m2 17 7-9 4 5 3-3 6 7v5H2z" fill="#fff" /></App24> },
  { name: "Snip & Sketch", open: true, art: <App24><ellipse cx="10" cy="11" rx="9" ry="6" fill="#9b9b9b" transform="rotate(-30 10 11)" /><ellipse cx="13" cy="8" rx="10" ry="6" fill="#f5f5f5" stroke="#d33" strokeWidth="1.500" transform="rotate(-30 13 8)" /><path d="m9 10 7-5" stroke="#c22" /><path d="m13 12 7 6M19 12l-3 8" stroke="#3185c9" strokeWidth="2" /><circle cx="21" cy="19" r="2" fill="none" stroke="#3185c9" strokeWidth="1.500" /><circle cx="15" cy="21.500" r="2" fill="none" stroke="#3185c9" strokeWidth="1.500" /></App24> },
];

const nav: [string, string][] = [
  ["Overview", icons.dashboard], ["Dashboard", icons.dashboard], ["Map", icons.person], ["Logbook", icons.list], ["History", icons.chart],
  ["Timeline", icons.gantt], ["Grafana", icons.area], ["Visual Studio Code", icons.vscode], ["Media Browser", icons.media],
];

const tabs = [
  { title: "Overview - Home Assistant" },
  { title: "Visual Studio Code - Home Assistant", fade: true },
  { title: "Overview - Home Assistant", active: true },
  { title: "Home Assistant" },
];

export default function App() {
  return (
    <Screen>
      <GlobalStyle />
      <Desktop>
        <BrowserWindow>
          <OperaBar aria-label="Browser sidebar">
            <OperaLogo aria-label="Opera menu"><OperaMark /></OperaLogo>
            <OperaButton aria-label="Speed dial"><HomeTile><svg width="16" height="16" viewBox="0 0 16 16" fill="none" stroke="#e8f5ff" strokeWidth="1.300"><path d="M2 6.800 8 1l6 5.800V13a2 2 0 0 1-2 2H4a2 2 0 0 1-2-2z" /></svg></HomeTile></OperaButton>
            <OperaButton aria-label="Bookmarks"><Line w={1.3}><path d="M9 1.500 11.500 6l5 1-3.200 4 .2 5L9 14.500 4.500 16l.2-5L1.500 7l5-1z" /></Line></OperaButton>
            <OperaDivider />
            <OperaButton aria-label="Messenger"><Messenger /></OperaButton>
            <OperaButton aria-label="WhatsApp"><WhatsApp /></OperaButton>
            <OperaButton aria-label="Instagram"><Instagram /></OperaButton>
            <OperaDivider />
            <OperaButton aria-label="My Flow"><Line><path d={plane} /></Line></OperaButton>
            <OperaDivider />
            <OperaButton aria-label="Favourites"><Line><path d={heart} /></Line></OperaButton>
            <OperaButton aria-label="History"><Line><circle cx="9" cy="9" r="8" /><path d="M9 4.500V9l3 3.500" /></Line></OperaButton>
            <OperaButton aria-label="Settings"><Line><circle cx="9" cy="9" r="2.800" /><path d="M7.500 1h3l.5 2.300 1.500.8 2.200-.8 1.500 2.600-1.700 1.600v1.700l1.700 1.600-1.500 2.600-2.200-.8-1.500.8-.5 2.600h-3L7 13.400l-1.500-.8-2.200.8-1.500-2.600 1.700-1.600V7.500L1.800 5.900l1.500-2.600 2.200.8L7 3.300z" /></Line></OperaButton>
            <Spacer />
            <OperaButton aria-label="More"><svg width="16" height="4" viewBox="0 0 16 4" fill="currentColor"><circle cx="2" cy="2" r="1.600" /><circle cx="8" cy="2" r="1.600" /><circle cx="14" cy="2" r="1.600" /></svg></OperaButton>
          </OperaBar>

          <Main>
            <TabStrip>
              {tabs.map((t, i) => (
                <React.Fragment key={i}>
                  <Tab $active={t.active}>
                    <Favicon />
                    <TabLabel $fade={t.fade}>{t.title}</TabLabel>
                    <TabClose aria-label="Close tab"><Cross /></TabClose>
                  </Tab>
                  {(i === 0 || i === 3) && <TabRule />}
                </React.Fragment>
              ))}
              <NewTab aria-label="New tab"><svg width="11" height="11" viewBox="0 0 11 11" stroke="currentColor" strokeWidth="1.200"><path d="M5.500 0v11M0 5.500h11" /></svg></NewTab>
              <WindowButtons>
                <WindowButton aria-label="Search tabs"><svg width="16" height="16" viewBox="0 0 16 16" fill="none" stroke="currentColor" strokeWidth="1.300"><circle cx="6.500" cy="6" r="5" /><path d="m10 9.500 5 5" /></svg></WindowButton>
                <WindowButton aria-label="Minimize"><svg width="12" height="12" viewBox="0 0 12 12" stroke="currentColor"><path d="M0 11.500h12" /></svg></WindowButton>
                <WindowButton aria-label="Maximize"><svg width="12" height="12" viewBox="0 0 12 12" fill="none" stroke="currentColor"><path d="M.5.5h11v11H.5z" /></svg></WindowButton>
                <WindowButton aria-label="Close"><Cross size={12} /></WindowButton>
              </WindowButtons>
            </TabStrip>

            <Toolbar>
              <ToolButton $w={33} aria-label="Back"><Line><path d="M12 2.500 5.500 9l6.500 6.500" /></Line></ToolButton>
              <ToolButton $w={33} aria-label="Forward" disabled><Line><path d="M6 2.500 12.500 9 6 15.500" /></Line></ToolButton>
              <ToolButton $w={32} aria-label="Reload"><Line w={1.4}><path d="M15 9.500A6 6 0 1 1 13.500 5M15 2v4h-4.500" /></Line></ToolButton>
              <ToolButton $w={31} aria-label="Speed dial"><svg width="13" height="12" viewBox="0 0 13 12" fill="none" stroke="currentColor" strokeWidth="1.100"><rect x=".5" y=".5" width="4.800" height="4.300" rx="1" /><rect x="7.500" y=".5" width="4.800" height="4.300" rx="1" /><rect x=".5" y="7" width="4.800" height="4.300" rx="1" /><rect x="7.500" y="7" width="4.800" height="4.300" rx="1" /></svg></ToolButton>
              <ToolRule $gap={6} />
              <ToolButton $w={36} aria-label="Not secure"><svg width="14" height="13" viewBox="0 0 14 13"><path d="M6 .8a1.200 1.200 0 0 1 2 0l6 11.200a.7.700 0 0 1-.6 1H.6a.7.700 0 0 1-.6-1z" fill="#26323c" /><path d="M7 4v4.500M7 9.500V11" stroke="#fff" strokeWidth="1.400" /></svg></ToolButton>
              <Address aria-label="Address"><b>zuidugchelen.eu</b>:8123/lovelace/map</Address>
              <ToolButton $w={26} aria-label="Zoom"><Line size={16} w={1.4}><circle cx="11" cy="7" r="5.800" /><path d="M7 11 1 17M11 4.500v5M8.500 7h5" /></Line></ToolButton>
              <ToolButton $w={26} aria-label="Snapshot"><Line size={16} w={1.4}><path d="M1.500 4.500H5l1.500-2h5l1.500 2h3.500v12h-15z" /><circle cx="9" cy="10" r="2.800" /></Line></ToolButton>
              <ToolButton $w={26} aria-label="Ad blocker"><Line size={16} w={1.4}><path d="M9 1.500 16 4v6c0 4-4 6-7 7-3-1-7-3-7-7V4z" /><path d="m6 6.500 6 6M12 6.500l-6 6" /></Line></ToolButton>
              <ToolButton $w={26} aria-label="Send to My Flow"><Line size={16} w={1.4}><path d={plane} /></Line></ToolButton>
              <ToolButton $w={26} aria-label="Save"><Line size={16} w={1.4}><path d={heart} /></Line></ToolButton>
              <ToolRule $gap={2} />
              <ToolButton $w={38} aria-label="Downloads"><Line size={16} w={1.4}><path d="M9 2v10M5 8.500 9 12.500l4-4M1.500 13v3h15v-3" /></Line></ToolButton>
              <ToolButton $w={26} aria-label="Easy setup"><Line size={14} w={1.5}><path d="M0 4h18M0 9h18M0 14h18M5 2v4M13 7v4M5 12v4" /></Line></ToolButton>
            </Toolbar>

            <Page>
              <SideNav aria-label="Home Assistant">
                <MenuButton aria-label="Menu"><Solid d={icons.menu} size={24} /></MenuButton>
                <NavList>
                  {nav.map(([name, d], i) => <NavItem key={name} href="#nav" aria-label={name} $active={i === 0}><Solid d={d} /></NavItem>)}
                  <Spacer />
                  <NavItem href="#tools" aria-label="Developer tools"><Solid d={icons.hammer} /></NavItem>
                  <NavItem href="#supervisor" aria-label="Supervisor"><HomeTree /></NavItem>
                  <NavItem href="#config" aria-label="Configuration"><Solid d={icons.cog} /></NavItem>
                </NavList>
                <NavFoot>
                  <NavItem href="#notifications" aria-label="Notifications"><Solid d={icons.bell} /></NavItem>
                  <Avatar href="#profile">h</Avatar>
                </NavFoot>
              </SideNav>

              <Lovelace>
                <Header>
                  <HeaderRow>
                    <AppTitle>Casetta - Ugchelen.</AppTitle>
                    <button aria-label="Options"><Solid d={icons.dots} /></button>
                  </HeaderRow>
                  <ViewTabs>
                    <ViewTab>HOME</ViewTab>
                    <ViewTab $active aria-label="Map"><MapPin /></ViewTab>
                  </ViewTabs>
                </Header>
                <Columns>
                  <Column>
                    <Card>
                      <CardTitle>Family Map</CardTitle>
                      <CardText>This is the Map Cards where you can find all family members around the World.</CardText>
                    </Card>
                    <Card>
                      <MapView>
                        <CountryMap />
                        <Marker $x={50} $y={36} $color="#1faa1f">i</Marker>
                        <Marker $x={50} $y={64} $color="#7a4fb0">S</Marker>
                      </MapView>
                    </Card>
                  </Column>
                  <Column>
                    <Card>
                      <CardTitle>Where is Samsung?</CardTitle>
                      <MapView><StreetMap /><Marker $x={50} $y={50} $color="#0288d1">S</Marker></MapView>
                    </Card>
                  </Column>
                  <Column>
                    <Card>
                      <CardTitle>Where is Iphone ?</CardTitle>
                      <MapView><StreetMap shift={4} /><Marker $x={50} $y={50} $color="#0288d1">ivP</Marker></MapView>
                    </Card>
                  </Column>
                </Columns>
              </Lovelace>
            </Page>
          </Main>
        </BrowserWindow>
      </Desktop>

      <Taskbar>
        <StartButton aria-label="Start"><Windows /></StartButton>
        <SearchBox>
          <svg width="17" height="17" viewBox="0 0 17 17" fill="none" stroke="currentColor" strokeWidth="1.300"><circle cx="10.500" cy="6.500" r="5.500" /><path d="M6.500 10.500.8 16.200" /></svg>
          <input aria-label="Search" placeholder="Type here to search" />
        </SearchBox>
        <TaskButton aria-label="Task view"><svg width="17" height="16" viewBox="0 0 17 16" fill="none" stroke="#fff"><path d="M.5 0v3h11V0M.5 16v-3h11v3M.5 5.500h11v5H.5zM15.500 0v3M15.500 7v9" /><path d="M14 4h3v2h-3z" fill="#fff" stroke="none" /></svg></TaskButton>
        {apps.map((a) => <TaskButton key={a.name} aria-label={a.name} $open={a.open} $active={a.active}>{a.art}</TaskButton>)}
        <Tray>
          <TrayButton aria-label="Show hidden icons"><svg width="12" height="7" viewBox="0 0 12 7" fill="none" stroke="#fff" strokeWidth="1.300"><path d="m.5 6.500 5.500-5.500 5.500 5.500" /></svg></TrayButton>
          <TrayButton aria-label="OneDrive"><svg width="16" height="11" viewBox="0 0 16 11"><path d="M3.500 10.500a3 3 0 0 1 0-6C4 2 6 .5 8 .5s3.500 1 4 3a3.500 3.500 0 0 1 .5 7z" fill="#fff" /></svg></TrayButton>
          <TrayButton aria-label="Mattermost"><svg width="15" height="15" viewBox="0 0 15 15"><circle cx="7.500" cy="7.500" r="6.500" fill="none" stroke="#fff" strokeWidth="1.400" /><path d="M5.500 4.500A4 4 0 1 0 10 4.500L8 9 7.500 3z" fill="#fff" /></svg></TrayButton>
          <TrayButton aria-label="Security"><svg width="15" height="15" viewBox="0 0 15 15" fill="none" stroke="#fff" strokeWidth="1.200"><circle cx="7.500" cy="7.500" r="6.500" /><path d="m4.500 7.500 2.300 2.300L11 5" /></svg></TrayButton>
          <TrayButton aria-label="Battery"><svg width="17" height="14" viewBox="0 0 17 14" fill="none" stroke="#fff"><path d="M5 4.500h10v7H5zM16.500 6.500v3M0 1.500h5v3H1v-3M2.500 4.500v6.500H5M1.500 0v1.500M3.500 0v1.500" /><path d="M6.500 6h7v4h-7z" fill="#fff" stroke="none" /></svg></TrayButton>
          <TrayButton aria-label="Network"><svg width="14" height="14" viewBox="0 0 14 14" fill="none" stroke="#fff"><path d="M1 13A12 12 0 0 1 13 1M4.500 13A8.500 8.500 0 0 1 13 4.500M8 13a5 5 0 0 1 5-5" stroke="#bbb" /><circle cx="12" cy="12" r="1.500" fill="#fff" /></svg></TrayButton>
          <TrayButton aria-label="Volume"><svg width="16" height="14" viewBox="0 0 16 14" fill="none" stroke="#fff"><path d="M.5 5H3l3-3v10L3 9H.5z" /><path d="M8 5q1.500 2 0 4M10.500 3q3 4 0 8" /><path d="M13 1q4 6 0 12" stroke="#888" /></svg></TrayButton>
          <Language>ENG</Language>
          <Clock><time>10:46 PM</time><time>10/11/2020</time></Clock>
          <Notifications aria-label="Notifications">
            <svg width="16" height="15" viewBox="0 0 16 15"><path d="M0 0h16v12H6l-3 3v-3H0z" fill="#fff" /><path d="M3 3.500h10M3 6h10M3 8.500h7" stroke="#232323" /></svg>
            <Badge>3</Badge>
          </Notifications>
        </Tray>
      </Taskbar>
    </Screen>
  );
}
